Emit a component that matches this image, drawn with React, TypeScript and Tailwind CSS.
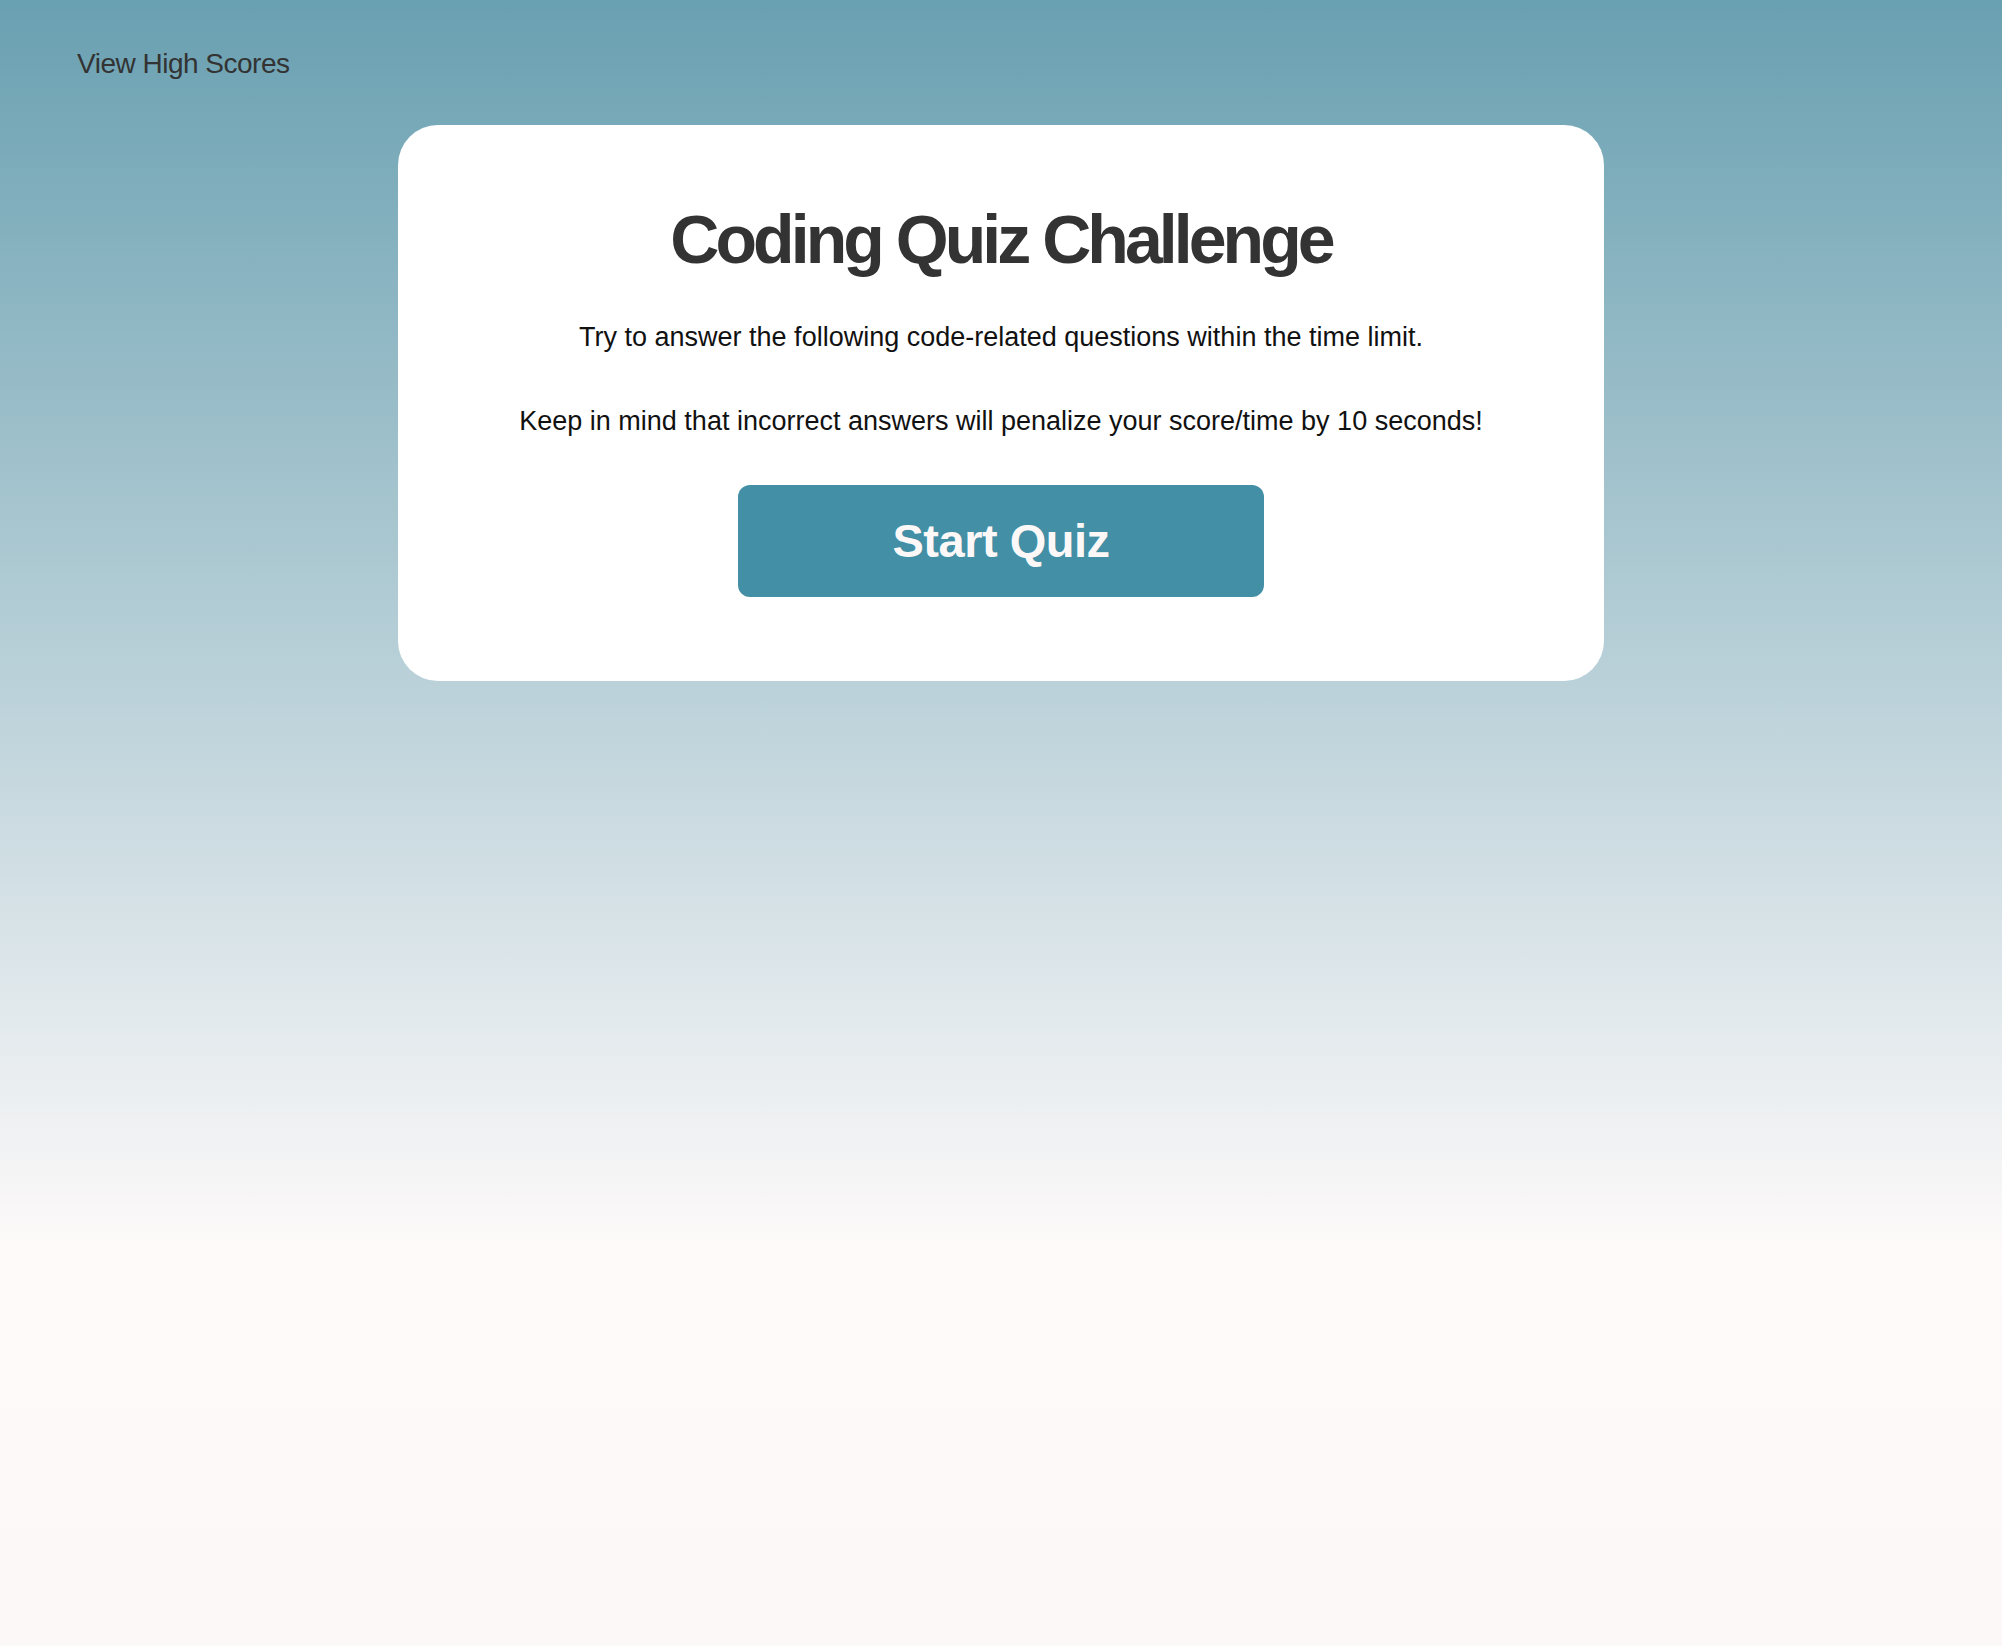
export default function App() {
  return (
    <div className="min-h-[1646px] w-full bg-[linear-gradient(to_bottom,#69a0b1_0%,#fefafa_76%,#fdf8f8_100%)] font-['Liberation_Sans',Arial,sans-serif]">
      <header className="flex px-[77px] pt-[50px]">
        <a href="#highscores" className="text-[28px] leading-[28px] tracking-[-0.5px] text-[#333333]">
          View High Scores
        </a>
      </header>

      <main className="mt-[47px] flex justify-center">
        <section className="flex w-[1206px] flex-col items-center rounded-[40px] bg-white pt-[80px] pb-[84px]">
          <h1 className="text-[68px] leading-[68px] font-bold tracking-[-3.95px] text-[#333333]">
            Coding Quiz Challenge
          </h1>
          <p className="mt-[51px] text-[27px] leading-[27px] text-[#111111]">
            Try to answer the following code-related questions within the time limit.
          </p>
          <p className="mt-[57px] text-[27px] leading-[27px] text-[#111111]">
            Keep in mind that incorrect answers will penalize your score/time by 10 seconds!
          </p>
          <button
            type="button"
            className="mt-[50px] flex h-[112px] w-[526px] items-center justify-center rounded-[12px] bg-[#428fa6] text-[47px] font-bold tracking-[-0.5px] text-[#fdf8f8]"
          >
            Start Quiz
          </button>
        </section>
      </main>
    </div>
  );
}
